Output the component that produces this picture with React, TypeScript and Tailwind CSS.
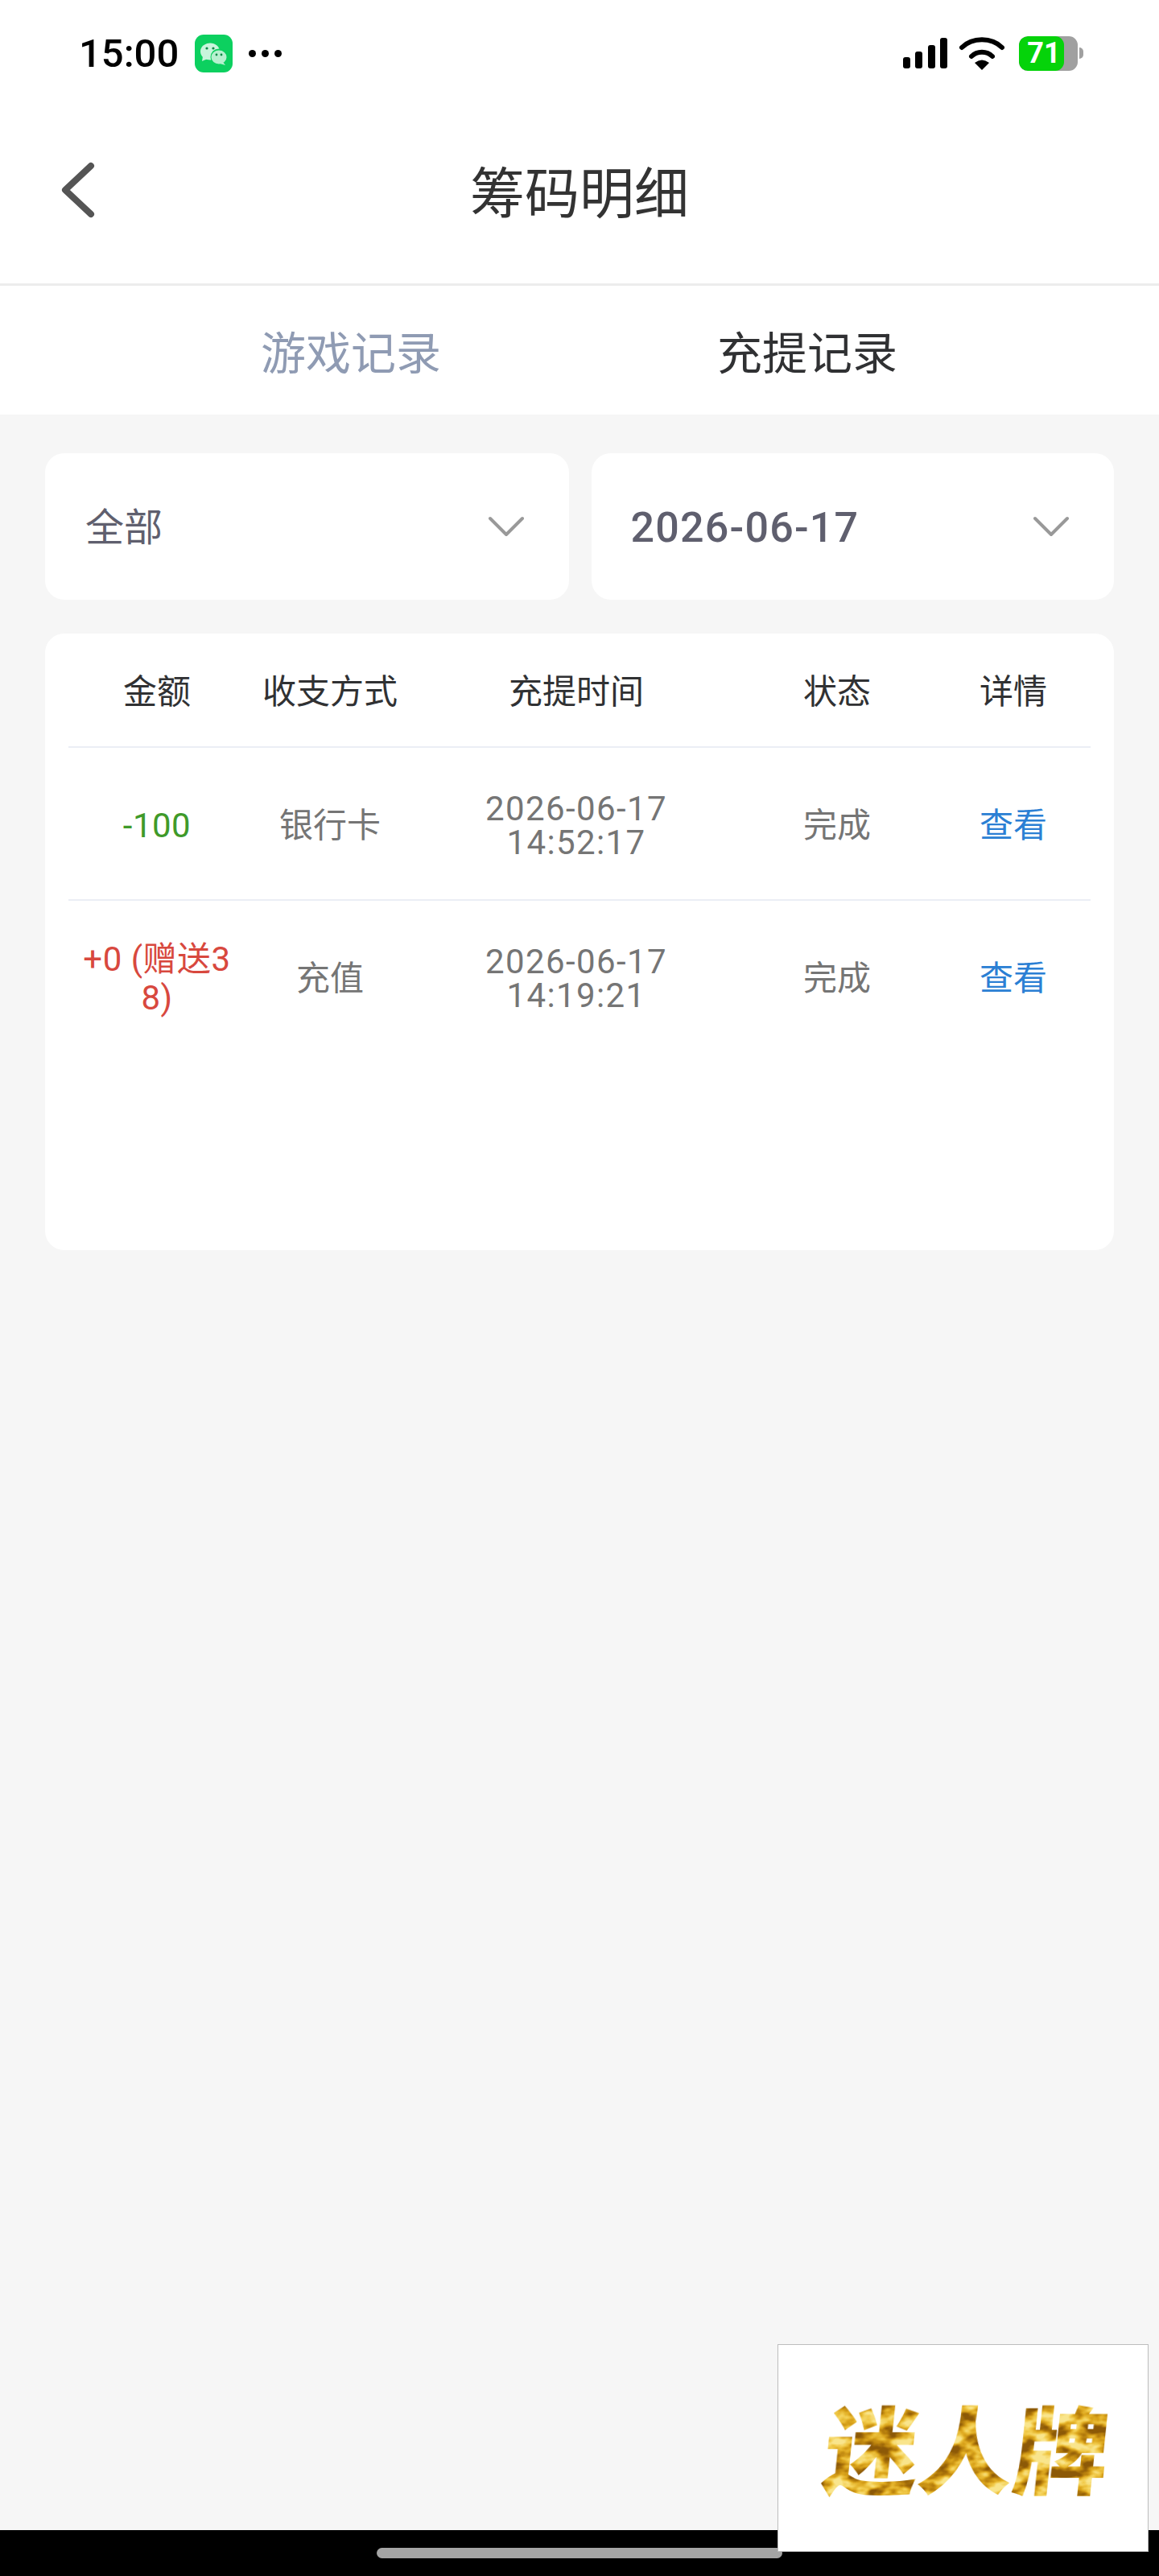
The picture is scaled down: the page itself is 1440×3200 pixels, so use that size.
import React from "react";

const rows = [
  { amount: "-100", color: "text-[#3f9a2a]", method: "银行卡", date: "2026-06-17", time: "14:52:17" },
  { amount: "+0 (赠送38)", color: "text-[#d8483e]", method: "充值", date: "2026-06-17", time: "14:19:21" },
];

const Chevron = () => (
  <svg width="44" height="26" viewBox="0 0 44 26" fill="none">
    <path d="M2 3 L22 23 L42 3" stroke="#999" strokeWidth="4" strokeLinecap="round" strokeLinejoin="round" />
  </svg>
);

function StatusBar() {
  return (
    <div className="h-[130px] flex items-center pl-[98px] pr-[94px] pt-[2px] bg-white">
      <span className="text-[49px] leading-none font-medium text-black">15:00</span>
      <svg className="ml-[20px]" width="47" height="47" viewBox="0 0 47 47">
        <rect width="47" height="47" rx="11" fill="#0cd05f" />
        <ellipse cx="19" cy="21" rx="12" ry="10.5" fill="#c9f5dc" />
        <path d="M10 27 L9 33 L16 30 Z" fill="#c9f5dc" />
        <circle cx="30" cy="28" r="10.5" fill="#0cd05f" />
        <ellipse cx="30" cy="28" rx="9.5" ry="8.5" fill="#b7f0cf" />
        <path d="M35 34 L38 38 L31 36 Z" fill="#b7f0cf" />
        <circle cx="15" cy="17" r="1.6" fill="#0a8a45" />
        <circle cx="23" cy="17" r="1.6" fill="#0a8a45" />
        <circle cx="27" cy="25" r="1.4" fill="#0a8a45" />
        <circle cx="33" cy="25" r="1.4" fill="#0a8a45" />
      </svg>
      <div className="ml-[20px] flex gap-[7px]">
        <span className="w-[9px] h-[9px] rounded-full bg-black" />
        <span className="w-[9px] h-[9px] rounded-full bg-black" />
        <span className="w-[9px] h-[9px] rounded-full bg-black" />
      </div>
      <div className="ml-auto flex items-center">
        <svg width="56" height="38" viewBox="0 0 56 38" fill="#000">
          <rect x="0" y="24" width="9" height="14" rx="3" />
          <rect x="15" y="17" width="9" height="21" rx="3" />
          <rect x="31" y="9" width="9" height="29" rx="3" />
          <rect x="46" y="0" width="9" height="38" rx="3" />
        </svg>
        <svg className="ml-[13px]" width="58" height="42" viewBox="0 0 58 42" fill="none">
          <path d="M4 14 C17 1 41 1 54 14" stroke="#000" strokeWidth="6" strokeLinecap="round" />
          <path d="M16 25 C23 18 35 18 42 25" stroke="#000" strokeWidth="6" strokeLinecap="round" />
          <path d="M20 33 Q29 26 38 33 L29 42 Z" fill="#000" />
        </svg>
        <div className="ml-[17px] flex items-center">
          <div className="relative w-[73px] h-[43px] rounded-[11px] bg-[#a0a0a0] overflow-hidden">
            <div className="absolute left-0 top-0 h-full w-[56px] rounded-[11px] bg-[#05d30a] flex items-center justify-center pl-[6px]">
              <span className="text-[36px] leading-none font-bold text-white">71</span>
            </div>
          </div>
          <div className="ml-[2px] w-[5px] h-[14px] rounded-r-full bg-[#a0a0a0]" />
        </div>
      </div>
    </div>
  );
}

export default function App() {
  return (
    <div className="relative w-[1440px] h-[3200px] flex flex-col bg-[#f6f6f6] overflow-hidden font-[Roboto,'Noto_Sans_CJK_SC',sans-serif]">
      <StatusBar />

      <div className="relative h-[225px] flex items-center justify-center bg-white border-b-[3px] border-[#ececec]">
        <svg className="absolute left-[72px] top-[67px]" width="50" height="78" viewBox="0 0 50 78" fill="none">
          <path d="M41 9 L9 39 L41 69" stroke="#555" strokeWidth="8" strokeLinecap="round" strokeLinejoin="round" />
        </svg>
        <h1 className="text-[68px] leading-none font-normal text-[#333] pt-[2px]">筹码明细</h1>
      </div>

      <div className="h-[160px] flex items-center bg-white pt-[10px] pl-[324px]">
        <span className="text-[56px] leading-none text-[#8f9bb3]">游戏记录</span>
        <span className="ml-[343px] text-[56px] leading-none text-[#303133]">充提记录</span>
      </div>

      <div className="px-[56px] pt-[48px]">
        <div className="flex gap-[28px]">
          <div className="flex-1 h-[182px] rounded-[24px] bg-white flex items-center justify-between pl-[50px] pr-[56px]">
            <span className="text-[48px] leading-none text-[#5f5f6e] pt-[4px]">全部</span>
            <Chevron />
          </div>
          <div className="flex-1 h-[182px] rounded-[24px] bg-white flex items-center justify-between pl-[49px] pr-[56px]">
            <span className="text-[52px] leading-none font-medium tracking-[1.2px] text-[#5f5f6e] pt-[4px]">2026-06-17</span>
            <Chevron />
          </div>
        </div>

        <div className="mt-[42px] h-[766px] rounded-[24px] bg-white px-[29px]">
          <div className="grid grid-cols-[220px_210px_402px_246px_192px] h-[142px] items-center text-center text-[42px] leading-none text-[#303133] border-b-[2px] border-[#ebeef5] pt-[6px]">
            <span>金额</span>
            <span>收支方式</span>
            <span>充提时间</span>
            <span>状态</span>
            <span>详情</span>
          </div>
          {rows.map((r, i) => (
            <div
              key={r.time}
              className={`grid grid-cols-[220px_210px_402px_246px_192px] h-[190px] items-center text-center text-[42px] text-[#757575] ${i === 0 ? "border-b-[2px] border-[#ebeef5] pt-[6px]" : "pt-[3px]"}`}
            >
              <span className={`${r.color} leading-[48px] px-[10px] tracking-[0.5px] break-all`}>{r.amount}</span>
              <span className="leading-none">{r.method}</span>
              <span className="leading-[42px] tracking-[1.4px]">
                <span className="block">{r.date}</span>
                <span className="block">{r.time}</span>
              </span>
              <span className="leading-none">完成</span>
              <span className="leading-none text-[#2b7fd4]">查看</span>
            </div>
          ))}
        </div>
      </div>

      <div className="mt-auto h-[57px] bg-black flex justify-center pt-[22px]">
        <div className="w-[504px] h-[13px] rounded-full bg-[#a5a5a5]" />
      </div>

      <div className="absolute left-[966px] top-[2912px] w-[461px] h-[258px] bg-white border border-[#bdbdbd]">
        <svg width="459" height="256" viewBox="0 0 459 256">
          <defs>
            <filter id="gold" x="0" y="0" width="100%" height="100%" colorInterpolationFilters="sRGB">
              <feTurbulence type="fractalNoise" baseFrequency="0.035 0.06" numOctaves="3" seed="7" />
              <feColorMatrix type="matrix" values="2.6 0 0 0 -0.8 2.6 0 0 0 -0.8 2.6 0 0 0 -0.8 0 0 0 0 1" />
              <feComponentTransfer>
                <feFuncR type="table" tableValues="0.55 0.72 0.87 0.95 0.98" />
                <feFuncG type="table" tableValues="0.35 0.5 0.66 0.8 0.9" />
                <feFuncB type="table" tableValues="0.03 0.05 0.12 0.3 0.55" />
              </feComponentTransfer>
              <feComposite in2="SourceAlpha" operator="in" />
            </filter>
          </defs>
          <text
            x="232"
            y="176"
            textAnchor="middle"
            fontSize="118"
            fontWeight="900"
            fontFamily="'Noto Sans CJK SC', sans-serif"
            fill="#c08a14"
            filter="url(#gold)"
            transform="skewX(-6) translate(16 0)"
          >
            迷人牌
          </text>
        </svg>
      </div>
    </div>
  );
}
